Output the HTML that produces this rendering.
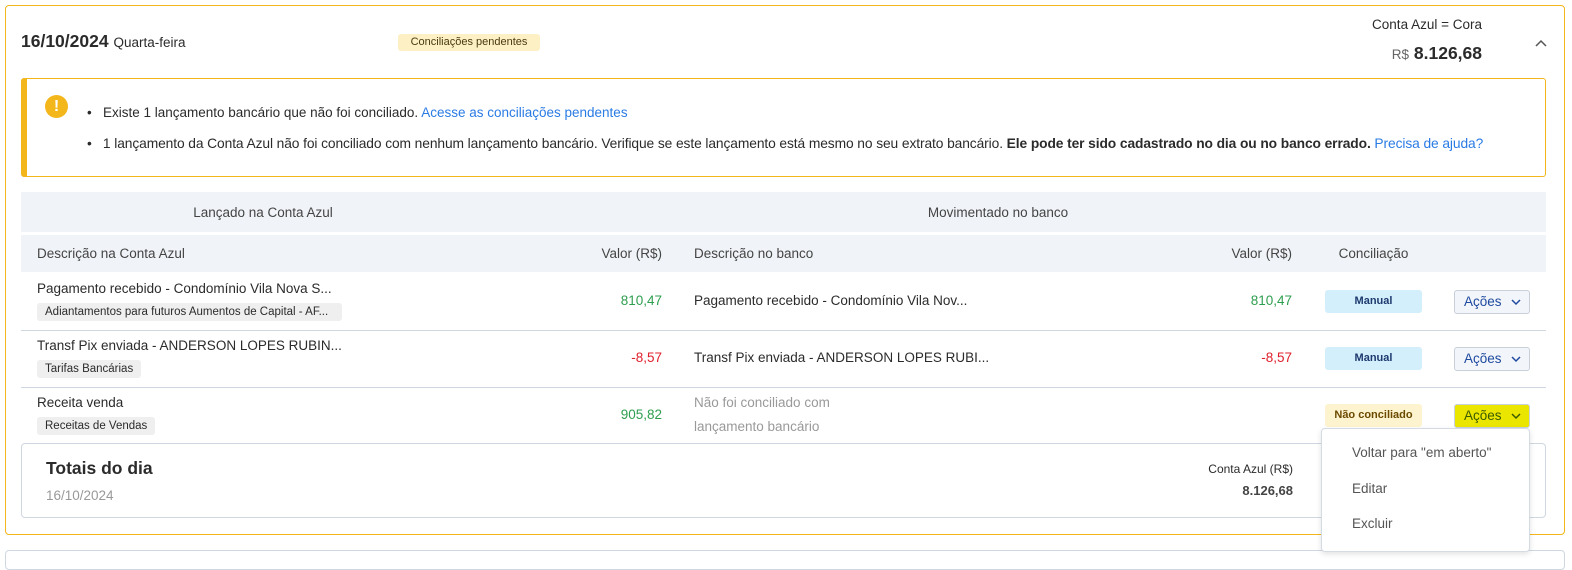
<!DOCTYPE html>
<html><head><meta charset="utf-8"><style>
*{margin:0;padding:0;box-sizing:border-box}
body{width:1572px;height:563px;background:#fff;font-family:"Liberation Sans",sans-serif;color:#2b2b2b;position:relative;overflow:hidden;font-size:13.5px}
.a{position:absolute;white-space:nowrap}
.r{text-align:right}
.card{position:absolute;left:5px;top:5px;width:1560px;height:530px;border:1px solid #f3b71b;border-radius:4px}
.alert{position:absolute;left:21px;top:78px;width:1525px;height:99px;border:1px solid #f3b71b;border-left:6px solid #f3b71b;border-radius:3px}
.band{position:absolute;left:21px;width:1525px;background:#f0f4f8}
.sep{position:absolute;left:21px;width:1525px;height:1px;background:#cfd7e0}
.tag{position:absolute;background:#efefef;border-radius:3px;font-size:11.5px;padding:0 8px;height:18px;line-height:18px;white-space:nowrap}
.badge{position:absolute;width:97px;height:23px;border-radius:3px;font-size:11px;font-weight:bold;text-align:center;line-height:23px}
.btn{position:absolute;left:1454px;width:76px;height:24px;border:1px solid #c8d0dc;border-radius:3px;background:#f2f5f9;color:#1f4aa0;font-size:13.5px;line-height:22px;padding-left:9px}
.btn svg{position:absolute;right:8px;top:8px}
.g{color:#2e9e4f}.red{color:#e0202e}
</style></head><body>
<div class="card"></div>
<div class="a" style="left:21px;top:31px;font-size:17.5px;font-weight:bold">16/10/2024 <span style="font-size:13.5px;font-weight:normal">Quarta-feira</span></div>
<div class="a" style="left:398px;top:34px;width:142px;height:17px;background:#fdf0c4;border-radius:3px;font-size:11px;text-align:center;line-height:17px;color:#4a3a10">Conciliações pendentes</div>
<div class="a r" style="right:90px;top:17px;font-size:13.5px">Conta Azul = Cora</div>
<div class="a r" style="right:90px;top:43px;font-size:17.5px;font-weight:bold"><span style="font-size:13.5px;font-weight:normal;color:#666">R$</span> 8.126,68</div>
<svg class="a" style="left:1534px;top:38px" width="14" height="10"><path d="M2 8L7 3L12 8" fill="none" stroke="#555" stroke-width="1.5"/></svg>

<div class="alert"></div>
<div class="a" style="left:45px;top:95px;width:23px;height:23px;border-radius:50%;background:#f3b71b;color:#fff;font-weight:bold;font-size:16px;text-align:center;line-height:23px">!</div>
<div class="a" style="left:87px;top:105px;font-size:13.5px">•&nbsp;&nbsp;&nbsp;Existe 1 lançamento bancário que não foi conciliado. <span style="color:#2a7be4">Acesse as conciliações pendentes</span></div>
<div class="a" style="left:87px;top:136px;font-size:13.8px;letter-spacing:-0.1px">•&nbsp;&nbsp;&nbsp;1 lançamento da Conta Azul não foi conciliado com nenhum lançamento bancário. Verifique se este lançamento está mesmo no seu extrato bancário. <b>Ele pode ter sido cadastrado no dia ou no banco errado.</b> <span style="color:#2a7be4">Precisa de ajuda?</span></div>

<div class="band" style="top:192px;height:40px"></div>
<div class="band" style="top:235px;height:37px"></div>
<div class="a" style="left:21px;width:484px;text-align:center;top:205px;color:#444">Lançado na Conta Azul</div>
<div class="a" style="left:680px;width:636px;text-align:center;top:205px;color:#444">Movimentado no banco</div>
<div class="a" style="left:37px;top:246px;color:#444">Descrição na Conta Azul</div>
<div class="a r" style="right:910px;top:246px;color:#444">Valor (R$)</div>
<div class="a" style="left:694px;top:246px;color:#444">Descrição no banco</div>
<div class="a r" style="right:280px;top:246px;color:#444">Valor (R$)</div>
<div class="a" style="left:1325px;width:97px;text-align:center;top:246px;color:#444">Conciliação</div>

<div class="a" style="left:37px;top:281px">Pagamento recebido - Condomínio Vila Nova S...</div>
<div class="tag" style="left:37px;top:303px;width:305px;overflow:hidden">Adiantamentos para futuros Aumentos de Capital - AF...</div>
<div class="a r g" style="right:910px;top:293px">810,47</div>
<div class="a" style="left:694px;top:293px">Pagamento recebido - Condomínio Vila Nov...</div>
<div class="a r g" style="right:280px;top:293px">810,47</div>
<div class="badge" style="left:1325px;top:290px;background:#d3effc;color:#1e3a6e">Manual</div>
<div class="btn" style="top:290px">Ações<svg width="10" height="7"><path d="M1 1L5 5L9 1" fill="none" stroke="#1f4aa0" stroke-width="1.5"/></svg></div>
<div class="sep" style="top:330px"></div>

<div class="a" style="left:37px;top:338px">Transf Pix enviada - ANDERSON LOPES RUBIN...</div>
<div class="tag" style="left:37px;top:360px">Tarifas Bancárias</div>
<div class="a r red" style="right:910px;top:350px">-8,57</div>
<div class="a" style="left:694px;top:350px">Transf Pix enviada - ANDERSON LOPES RUBI...</div>
<div class="a r red" style="right:280px;top:350px">-8,57</div>
<div class="badge" style="left:1325px;top:347px;background:#d3effc;color:#1e3a6e">Manual</div>
<div class="btn" style="top:347px">Ações<svg width="10" height="7"><path d="M1 1L5 5L9 1" fill="none" stroke="#1f4aa0" stroke-width="1.5"/></svg></div>
<div class="sep" style="top:387px"></div>

<div class="a" style="left:37px;top:395px">Receita venda</div>
<div class="tag" style="left:37px;top:417px">Receitas de Vendas</div>
<div class="a r g" style="right:910px;top:407px">905,82</div>
<div class="a" style="left:694px;top:395px;color:#999">Não foi conciliado com</div>
<div class="a" style="left:694px;top:419px;color:#999">lançamento bancário</div>
<div class="badge" style="left:1325px;top:404px;background:#fdf3cf;color:#6b4a00">Não conciliado</div>
<div class="btn" style="top:404px;background:#ebe600;color:#3a5a00;border-color:#c8d0dc">Ações<svg width="10" height="7"><path d="M1 1L5 5L9 1" fill="none" stroke="#3a5a00" stroke-width="1.5"/></svg></div>

<div class="a" style="left:21px;top:443px;width:1525px;height:75px;border:1px solid #cfd7e0;border-radius:4px"></div>
<div class="a" style="left:46px;top:458px;font-size:17.5px;font-weight:bold">Totais do dia</div>
<div class="a" style="left:46px;top:488px;color:#999">16/10/2024</div>
<div class="a r" style="right:279px;top:462px;font-size:12px">Conta Azul (R$)</div>
<div class="a r" style="right:279px;top:483px;font-size:13px;font-weight:bold;color:#444">8.126,68</div>

<div class="a" style="left:5px;top:550px;width:1560px;height:20px;border:1px solid #cfd7e0;border-radius:4px"></div>

<div class="a" style="left:1321px;top:428px;width:209px;height:124px;background:#fff;border:1px solid #d5dbe3;border-radius:4px;box-shadow:0 2px 6px rgba(0,0,0,.12)"></div>
<div class="a" style="left:1352px;top:445px;color:#555">Voltar para "em aberto"</div>
<div class="a" style="left:1352px;top:481px;color:#555">Editar</div>
<div class="a" style="left:1352px;top:516px;color:#555">Excluir</div>
</body></html>
